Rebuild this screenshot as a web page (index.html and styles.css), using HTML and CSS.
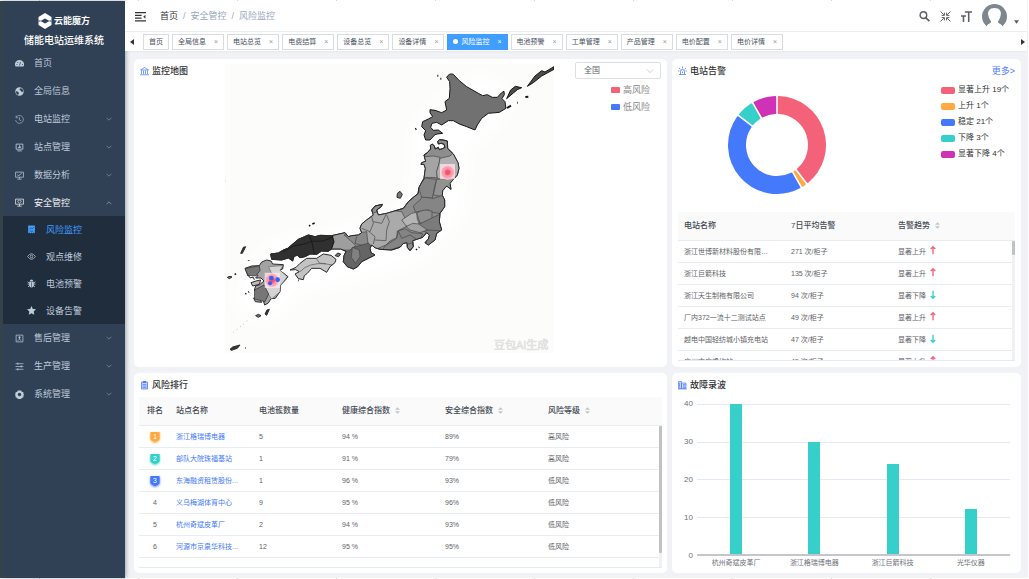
FILE: index.html
```html
<!DOCTYPE html>
<html lang="zh-CN">
<head>
<meta charset="utf-8">
<title>储能电站运维系统</title>
<link rel="stylesheet" href="styles.css">
</head>
<body>
<svg class="sprite" aria-hidden="true">
  <symbol id="down" viewBox="0 0 10 10"><path d="M1 3l4 4 4-4" fill="none" stroke="currentColor"/></symbol>
  <symbol id="up" viewBox="0 0 10 10"><path d="M1 7l4-4 4 4" fill="none" stroke="currentColor"/></symbol>
  <symbol id="sort" viewBox="0 0 6 10"><path d="M0 4l3-3 3 3zM0 6l3 3 3-3z" fill="#c0c4cc"/></symbol>
  <symbol id="rise" viewBox="0 0 8 12"><path d="M4 11V1M1 4l3-3 3 3" fill="none" stroke="#f4627a" stroke-width="1.8"/></symbol>
  <symbol id="fall" viewBox="0 0 8 12"><path d="M4 1v10M1 8l3 3 3-3" fill="none" stroke="#36cfc9" stroke-width="1.8"/></symbol>
  <symbol id="shield" viewBox="0 0 12 12"><path d="M1 1h10v8L9 10.500 6 12 3 10.500 1 9z" fill="currentColor"/></symbol>
</svg>
<div class="app">
  <aside class="sidebar">
    <div class="brand">
      <div class="logo">
        <svg viewBox="0 0 28 32"><path d="M14 0l13 8v16l-13 8L1 24V8z" fill="#fff"/><path d="M5 16l9-5 9 5-9 5z" fill="#304156"/><path d="M1 16h4M23 16h4" stroke="#304156" stroke-width="2"/></svg>
        <span>云能魔方</span>
      </div>
      <h1>储能电站运维系统</h1>
    </div>
    <nav>
      <ul class="menu">
        <li><a href="#"><svg viewBox="0 0 18 16"><path d="M1 14a9 9 0 1 1 16 0z" fill="currentColor"/><path d="M9 12l2-7M3 10h2M5 5l1 2M14 10h2" stroke="#304156" stroke-width="1.500"/></svg><span>首页</span></a></li>
        <li><a href="#"><svg viewBox="0 0 16 16"><circle cx="8" cy="8" r="7.500" fill="currentColor"/><path d="M9 2l4 1 2 5-3 1-2-3-2-1zM2 7l4 2 1 3-2 2-3-3z" fill="#304156"/></svg><span>全局信息</span></a></li>
        <li><a href="#"><svg viewBox="0 0 16 16"><path d="M2 4a7 7 0 1 1-1 5M2 1v4h4M8 4v5l3 1" fill="none" stroke="currentColor"/></svg><span>电站监控</span><svg class="fold"><use href="#down"/></svg></a></li>
        <li><a href="#"><svg viewBox="0 0 16 16"><path d="M2 2h12v9H2zM4 14h8M6 9V7M8 9V4M10 9V6" fill="none" stroke="currentColor" stroke-width="1.500"/></svg><span>站点管理</span><svg class="fold"><use href="#down"/></svg></a></li>
        <li><a href="#"><svg viewBox="0 0 16 16"><path d="M1 2h14v9H1zM8 11v3M4 14.500h8M4 7l3 1 5-4" fill="none" stroke="currentColor" stroke-width="1.300"/></svg><span>数据分析</span><svg class="fold"><use href="#down"/></svg></a></li>
        <li><a class="open" href="#"><svg viewBox="0 0 16 16"><path d="M1 2h14v9H1zM8 11v3M4 14.500h8" fill="none" stroke="currentColor" stroke-width="1.300"/><path d="M8 4l3 1v2L8 9 5 7V5z" fill="none" stroke="currentColor"/></svg><span>安全管控</span><svg class="fold"><use href="#up"/></svg></a>
          <ul class="submenu">
            <li><a class="active" href="#"><svg viewBox="0 0 16 16"><path d="M2 1h12v14l-2-1.500L10 15l-2-1.500L6 15l-2-1.500L2 15z" fill="currentColor"/><path d="M4 8l3-3 2 2 3-3M5 11h6" fill="none" stroke="#1f2d3d"/></svg><span>风险监控</span></a></li>
            <li><a href="#"><svg viewBox="0 0 16 16"><path d="M1 8q7-10 14 0-7 10-14 0z" fill="none" stroke="currentColor" stroke-width="1.300"/><circle cx="8" cy="8" r="2.300" fill="none" stroke="currentColor" stroke-width="1.300"/></svg><span>观点维修</span></a></li>
            <li><a href="#"><svg viewBox="0 0 16 16"><path d="M5 4a3 3 0 0 1 6 0zM4 5h8v6a4 4 0 0 1-8 0z" fill="currentColor"/><path d="M1 5l3 2M15 5l-3 2M1 9h14M2 14l3-3M14 14l-3-3" stroke="currentColor" stroke-width="1.500"/><path d="M8 6v8" stroke="#1f2d3d"/></svg><span>电池预警</span></a></li>
            <li><a href="#"><svg viewBox="0 0 16 16"><path d="M8 0l2.400 5.200 5.600.7-4.100 3.900 1 5.700L8 12.800 3.100 15.500l1-5.700L0 5.900l5.600-.7z" fill="currentColor"/></svg><span>设备告警</span></a></li>
          </ul>
        </li>
        <li><a href="#"><svg viewBox="0 0 16 16"><path d="M2 2h12v12H2zM5 12l3-3 3 3M8 9V7" fill="none" stroke="currentColor" stroke-width="1.300"/><circle cx="8" cy="6" r="1.800" fill="currentColor"/></svg><span>售后管理</span><svg class="fold"><use href="#down"/></svg></a></li>
        <li><a href="#"><svg viewBox="0 0 16 16"><path d="M1 3h14M1 8h14M1 13h14M5 1v4M11 6v4M5 11v4" stroke="currentColor" stroke-width="1.300"/></svg><span>生产管理</span><svg class="fold"><use href="#down"/></svg></a></li>
        <li><a href="#"><svg viewBox="0 0 16 16"><path d="M5 1h6l1 2 3 1v3l1 1-1 2v3l-3 1-1 2H5l-1-2-3-1v-3L0 8l1-2V4l3-1z" fill="currentColor"/><circle cx="8" cy="8" r="3" fill="#304156"/></svg><span>系统管理</span><svg class="fold"><use href="#down"/></svg></a></li>
      </ul>
    </nav>
  </aside>

  <div class="main">
    <header class="topbar">
      <button class="icon-btn" aria-label="收起菜单"><svg viewBox="0 0 20 18"><path d="M0 2h20M0 7h12M0 12h12M0 17h20" stroke="#333" stroke-width="2"/><path d="M19 6v7l-4-3.500z" fill="#333"/></svg></button>
      <nav class="crumbs"><a href="#">首页</a><i>/</i><span>安全管控</span><i>/</i><span>风险监控</span></nav>
      <div class="tools">
        <button class="icon-btn" aria-label="搜索"><svg viewBox="0 0 20 20"><circle cx="8" cy="7.500" r="6" fill="none" stroke="#5a5e66" stroke-width="2.600"/><path d="M12 12l7 6.500" stroke="#5a5e66" stroke-width="3.200"/></svg></button>
        <button class="icon-btn" aria-label="全屏"><svg viewBox="0 0 20 20"><path d="M1 1l6 6M8 3v5H3M19 1l-6 6M12 3v5h5M1 19l6-6M8 17v-5H3M19 19l-6-6M12 17v-5h5" fill="none" stroke="#5a5e66" stroke-width="1.800"/></svg></button>
        <button class="icon-btn" aria-label="字号"><svg viewBox="0 0 20 20"><path d="M7 2h13M14 2v18M0 9h9M4.500 9v11" fill="none" stroke="#5a5e66" stroke-width="2.800"/></svg></button>
        <button class="user" aria-label="用户"><svg class="avatar" viewBox="0 0 50 50"><circle cx="25" cy="25" r="25" fill="#7d878f"/><path d="M25 8c-10 0-15 7-12 16 1 6 4 8 5 11 0 4-5 4-8 8v7h30v-7c-3-4-8-4-8-8 1-3 4-5 5-11C40 15 35 8 25 8z" fill="#fff"/></svg><svg class="caret" viewBox="0 0 6 4"><path d="M0 0h6L3 4z" fill="#5a5e66"/></svg></button>
      </div>
    </header>
    <div class="tagbar">
      <button class="scroll" aria-label="向左"><svg viewBox="0 0 4 6"><path d="M4 0v6L0 3z"/></svg></button>
      <nav class="tags">
        <a href="#">首页</a><a href="#">全局信息<i>×</i></a><a href="#">电站总览<i>×</i></a><a href="#">电费结算<i>×</i></a><a href="#">设备总览<i>×</i></a><a href="#">设备详情<i>×</i></a><a class="current" href="#">风险监控<i>×</i></a><a href="#">电池预警<i>×</i></a><a href="#">工单管理<i>×</i></a><a href="#">产品管理<i>×</i></a><a href="#">电价配置<i>×</i></a><a href="#">电价详情<i>×</i></a>
      </nav>
      <button class="scroll" aria-label="向右"><svg viewBox="0 0 4 6"><path d="M0 0v6l4-3z"/></svg></button>
    </div>

    <main class="board">
      <section class="card map-card">
        <h2><svg viewBox="0 0 18 18"><path d="M1 7l8-5 8 5zM3 8v7M7 8v7M11 8v7M15 8v7M0 16.500h18" fill="none" stroke="currentColor" stroke-width="1.500"/></svg>监控地图</h2>
        <svg class="map" viewBox="15 12 987 868" role="img" aria-label="风险分布地图">
          <defs>
            <radialGradient id="heat"><stop offset="0" stop-color="#f4456a"/><stop offset=".35" stop-color="#f4627a"/><stop offset=".45" stop-color="#f98fa4"/><stop offset=".8" stop-color="#fba9ba"/><stop offset="1" stop-color="#fde3e8"/></radialGradient>
            <filter id="soft" x="-20%" y="-20%" width="140%" height="140%"><feGaussianBlur stdDeviation="22"/></filter>
            <path id="honshu" d="M612 15L622 8 632-3 631-14 637-18 643-12 646-3 655-8 658-1 667-4 675-8 672-17 664-20 655-18 653-26 659-31 670-30 682-27 683-5 700 12 714 38 717 55 712 75 697 92 690 100 693 118 680 108 668 122 667 136 674 150 674 170 660 190 658 215 665 240 650 250 645 270 625 285 615 278 625 267 628 256 620 248 608 262 590 268 578 272 580 290 570 302 562 292 561 278 550 280 540 292 515 300 480 298 465 293 455 285 450 295 453 308 465 315 445 325 425 335 413 350 400 357 382 350 370 335 372 317 378 304 362 297 348 297 335 297 325 304 305 303 290 313 270 312 255 320 240 323 232 316 222 319 218 333 205 324 185 330 155 328 152 312 175 309 190 300 203 295 235 268 265 255 285 260 300 256 335 257 375 248 385 260 395 257 415 255 425 248 420 235 425 222 440 210 460 195 455 180 465 168 487 163 484 170 470 180 475 195 500 190 550 175 565 155 580 142 594 131 597 112 612 85 616 55 612 43 603 43 605 38 617 34z"/>
            <clipPath id="land"><use href="#honshu"/></clipPath>
          </defs>
          <path d="M15 12h987v868H15z" fill="#fcfcfb"/>
          <path d="M780 130L660 230 650 430 560 530 400 580 200 620 130 700" fill="none" stroke="#fff" stroke-width="170" stroke-linecap="round" stroke-linejoin="round" filter="url(#soft)"/>
          <g stroke="#151515" stroke-width="3" stroke-linejoin="round">
            <path d="M680 52Q688 38 700 43L718 62 740 80 775 100 788 107 802 104 817 112 832 112 845 98 852 94 853 104 846 116 855 125 858 145 838 157 805 160 785 175 772 195 765 210 740 200 718 192 700 182 685 182 665 195 650 187 636 190 632 202 640 211 655 210 668 220 652 222 645 224 630 240 617 240 612 225 617 212 605 200 608 185 625 177 638 170 630 158 630 149 645 151 665 158 680 150 675 125 688 115 690 85 689 65z" fill="#717171"/>
            <path d="M860 116L872 90 886 79 905 83 892 89 880 99zM922 79L945 48 965 32 975 36 1002 20V28L965 48 940 68z" fill="#4c4c4c"/>
            <path d="M652 47h3M661 56h3M586 208l3-2M861 144l12-7M892 128h2M916 111l9-1" fill="none" stroke-width="6"/>
          </g>
          <g transform="translate(0 270)" stroke="#2a2a2a" stroke-width="3" stroke-linejoin="round">
            <use href="#honshu" fill="#8d8d8d"/>
            <g clip-path="url(#land)" stroke="#444" stroke-width="2">
              <path d="M590 18L618 20 640 18 660 22 657 42 650 65 652 83 618 82 590 95z" fill="#a4a4a4"/>
              <path d="M660 25L690 18 710 0 740 60 700 98 652 85 650 65 657 42z" fill="#b0b0b0"/>
              <path d="M595 110L615 84 650 88 645 106 637 145 605 142z" fill="#858585"/>
              <path d="M650 88L720 85V130L668 140 640 135z" fill="#929292"/>
              <path d="M580 168L600 150 606 141 640 145 668 136 690 150 660 190 640 188 625 180 586 186z" fill="#858585"/>
              <path d="M415 235L450 190 505 180 545 185 555 204 548 214 562 222 558 230 532 243 530 263 510 273 498 285 466 298 440 275z" fill="#aaa"/>
              <path d="M545 210L575 190 590 187 592 208 598 221 575 230 558 228 550 216z" fill="#b5b5b5"/>
              <path d="M590 190Q612 174 636 184V205Q620 225 600 219z" fill="#8e8e8e"/>
              <path d="M598 222L665 190 690 260 620 300 618 246 575 231z" fill="#7b7b7b"/>
              <path d="M558 230L578 220 596 222 622 240 600 248 570 240z" fill="#a2a2a2"/>
              <path d="M535 243L555 236 575 248 608 251 600 272 555 285 480 310 497 286 530 265z" fill="#848484"/>
              <path d="M330 240H375L410 285 390 300 330 300 338 275z" fill="#9e9e9e"/>
              <path d="M372 255L440 245 445 290 410 290 395 275z" fill="#888"/>
              <path d="M360 310L390 302 400 292 425 285 445 280 475 315 405 370 355 350z" fill="#656565"/>
              <path d="M397 292L418 300 420 320 407 340 394 322z" fill="#818181"/>
              <path d="M140 350L145 300 265 245 335 252 342 275 330 310 220 345z" fill="#303030" stroke="#111" stroke-width="3"/>
              <path d="M190 305L220 288 255 282 275 274 283 310M268 257L275 274 310 273 340 260" fill="none" stroke="#111"/>
              <path d="M425 235L450 245 460 220 455 200M460 215L485 220 500 190M448 246L465 260 460 282M465 270L498 272 500 240 508 215 500 195M618 240L660 242M536 245L545 265 570 255 590 268M410 260L405 280 425 286" fill="none"/>
            </g>
            <use href="#honshu" fill="none"/>
            <path d="M210 360L228 352 240 340 260 325 290 325 310 312 333 316 348 328 345 338 330 350 320 367 300 355 275 355 262 370 253 377 250 389 235 386 225 372 238 365 227 359z" fill="#c3c3c3"/>
            <path d="M240 365Q265 337 318 341M288 324L298 339 338 345" fill="none" stroke="#555" stroke-width="2"/>
            <path d="M75 355L95 348 118 347 125 336 140 330 153 333 158 342 190 344 188 357 178 361 190 369 204 380 197 389 182 405 180 425 166 445 153 446 145 459 134 465 130 452 136 445 127 439 117 445 125 457 106 455 101 444 113 440 103 420 107 408 119 404 132 393 123 384 107 384 114 376 96 370 84 378z" fill="#a3a3a3"/>
            <path d="M146 350L188 347 180 361 202 380 182 405 180 425 155 447 134 415 132 395 155 370z" fill="#d4d4d4" stroke-width="1"/>
            <path d="M75 356L118 347 120 362 107 378 84 376zM104 420L132 405 146 432 135 455 103 447z" fill="#777" stroke-width="2"/>
            <path d="M93 398L108 393 122 390 118 403 98 408zM83 374l8 10 8-3 4 8" fill="#bbb"/>
            <path d="M532 130l8-6 7 9-6 12-10-3zM107 497l8-4 8 4-8 5zM22 382l8-3 6 2-8 5zM345 317l8-8 9 3-6 8z" fill="#777"/>
            <path d="M62 310l8-18 7-2-10 20zM135 492l6-12 7-2-8 18zM30 598l8-7 22-6-8 10-18 6z" fill="#333"/>
            <path d="M75 594h2M44 374l4-3M267 228l4-2M277 222l7-3M86 330v2M76 432l3-2M85 427l2-2M234 391h2M588 300l3-3M596 293l2-2" stroke="#151515" stroke-width="5"/>
            <path d="M82 513L34 552" stroke="#777" stroke-dasharray="2 11" stroke-width="2"/>
            <path d="M14 87v9" stroke="#999"/>
          </g>
          <path d="M660 312h45v46h-45zM134 638h46v46h-46z" fill="#fbe9ec" opacity=".75"/>
          <circle cx="683" cy="337" r="22" fill="url(#heat)"/>
          <circle cx="156" cy="661" r="22" fill="url(#heat)"/>
          <g fill="#2f62f5"><circle cx="154" cy="654" r="7"/><circle cx="173" cy="659" r="7"/><circle cx="150" cy="670" r="6"/></g>
          <text class="watermark" x="822" y="867">豆包AI生成</text>
        </svg>
        <div class="map-side">
          <div class="picker"><select aria-label="区域"><option>全国</option></select><svg><use href="#down"/></svg></div>
          <ul class="levels"><li class="c-red">高风险</li><li class="c-blue">低风险</li></ul>
        </div>
      </section>

      <section class="card alarm-card">
        <div class="card-head">
          <h2><svg viewBox="0 0 18 18"><path d="M5 15V10a4 4 0 0 1 8 0v5M2 16h14M9 0v4M2 3l3 3M16 3l-3 3M0 9h3M15 9h3M9 10v3" fill="none" stroke="currentColor" stroke-width="1.600"/></svg>电站告警</h2>
          <a class="more" href="#">更多&gt;</a>
        </div>
        <div class="pie">
          <svg viewBox="-50 -50 100 100" role="img" aria-label="告警趋势占比" stroke-width="2" stroke-linejoin="round">
            <path fill="#f4627a" stroke="#f4627a" d="M1.800-47.970A48 48 0 0 1 30.630 36.960L20.880 24.250A32 32 0 0 0 1.800-31.950z"/>
            <path fill="#ffa940" stroke="#ffa940" d="M27.770 39.150A48 48 0 0 1 25.540 40.640L17.530 26.770 18.020 26.440z"/>
            <path fill="#4479fb" stroke="#4479fb" d="M22.420 42.440A48 48 0 0 1-39.150-27.770L-26.440-18.020A32 32 0 0 0 14.420 28.570z"/>
            <path fill="#36cfc9" stroke="#36cfc9" d="M-36.960-30.630A48 48 0 0 1-25.540-40.640L-17.530-26.770A32 32 0 0 0-24.250-20.880z"/>
            <path fill="#cf32b4" stroke="#cf32b4" d="M-22.420-42.440A48 48 0 0 1-1.800-47.970L-1.800-31.950A32 32 0 0 0-14.420-28.570z"/>
          </svg>
          <ul class="legend"><li class="c-red">显著上升 19个</li><li class="c-orange">上升 1个</li><li class="c-blue">稳定 21个</li><li class="c-teal">下降 3个</li><li class="c-purple">显著下降 4个</li></ul>
        </div>
        <div class="scrollbox alarm-list">
          <table>
            <colgroup><col class="w-station"><col class="w-avg"><col></colgroup>
            <thead><tr><th>电站名称</th><th>7日平均告警</th><th>告警趋势<svg class="sort"><use href="#sort"/></svg></th></tr></thead>
            <tbody>
              <tr><td>浙江世博新材料股份有限…</td><td>271 次/柜子</td><td>显著上升<svg class="trend"><use href="#rise"/></svg></td></tr>
              <tr><td>浙江巨箭科技</td><td>135 次/柜子</td><td>显著上升<svg class="trend"><use href="#rise"/></svg></td></tr>
              <tr><td>浙江天生制袍有限公司</td><td>94 次/柜子</td><td>显著下降<svg class="trend"><use href="#fall"/></svg></td></tr>
              <tr><td>厂内372一流十二测试站点</td><td>49 次/柜子</td><td>显著上升<svg class="trend"><use href="#rise"/></svg></td></tr>
              <tr><td>越电中国轻纺城小镇充电站</td><td>47 次/柜子</td><td>显著下降<svg class="trend"><use href="#fall"/></svg></td></tr>
              <tr><td>广州市广重均站</td><td>45 次/柜子</td><td>显著上升<svg class="trend"><use href="#rise"/></svg></td></tr>
            </tbody>
          </table>
          <div class="track"><div class="thumb"></div></div>
        </div>
      </section>

      <section class="card rank-card">
        <h2><svg viewBox="0 0 18 18"><path d="M3 3h12v14H3z" fill="#c9d7ff" stroke="currentColor" stroke-width="1.600"/><path d="M6 1h6v4H6z" fill="currentColor"/><path d="M5 8h8M5 11h8M5 14h8" stroke="currentColor" stroke-width="1.400"/></svg>风险排行</h2>
        <div class="scrollbox rank-list">
          <table>
            <colgroup><col class="w-rank"><col class="w-name"><col class="w-name"><col class="w-index"><col class="w-index"><col></colgroup>
            <thead><tr><th class="num">排名</th><th>站点名称</th><th>电池簇数量</th><th>健康综合指数<svg class="sort"><use href="#sort"/></svg></th><th>安全综合指数<svg class="sort"><use href="#sort"/></svg></th><th>风险等级<svg class="sort"><use href="#sort"/></svg></th></tr></thead>
            <tbody>
              <tr><td class="num"><span class="badge b-orange"><svg><use href="#shield"/></svg><b>1</b></span></td><td><a href="#">浙江格瑞博电器</a></td><td>5</td><td>94 %</td><td>89%</td><td>高风险</td></tr>
              <tr><td class="num"><span class="badge b-teal"><svg><use href="#shield"/></svg><b>2</b></span></td><td><a href="#">部队大院珠福基站</a></td><td>1</td><td>91 %</td><td>79%</td><td>高风险</td></tr>
              <tr><td class="num"><span class="badge b-blue"><svg><use href="#shield"/></svg><b>3</b></span></td><td><a href="#">东海融资租赁股份...</a></td><td>1</td><td>96 %</td><td>93%</td><td>低风险</td></tr>
              <tr><td class="num">4</td><td><a href="#">义乌梅湖体育中心</a></td><td>9</td><td>95 %</td><td>96%</td><td>低风险</td></tr>
              <tr><td class="num">5</td><td><a href="#">杭州奇斌皮革厂</a></td><td>2</td><td>94 %</td><td>93%</td><td>低风险</td></tr>
              <tr><td class="num">6</td><td><a href="#">河源市京泉华科技...</a></td><td>12</td><td>95 %</td><td>95%</td><td>低风险</td></tr>
            </tbody>
          </table>
          <div class="track"><div class="thumb long"></div></div>
        </div>
      </section>

      <section class="card fault-card">
        <h2><svg viewBox="0 0 18 18"><path d="M1 2h6v14H1zM7 5h9v11H7z" fill="#c9d7ff" stroke="currentColor" stroke-width="1.400"/><path d="M3 5v9M10 8h5M10 11h5M10 14h5M0 17h18" stroke="currentColor" stroke-width="1.300"/></svg>故障录波</h2>
        <div class="chart">
          <div class="y-axis"><span>40</span><span>30</span><span>20</span><span>10</span><span>0</span></div>
          <div class="plot">
            <div class="lines"><i></i><i></i><i></i><i></i></div>
            <div class="bars"><div style="height:100%"></div><div style="height:75%"></div><div style="height:60%"></div><div style="height:30%"></div></div>
          </div>
          <div class="x-axis"><span>杭州奇斌皮革厂</span><span>浙江格瑞博电器</span><span>浙江巨箭科技</span><span>光华仪器</span></div>
        </div>
      </section>
    </main>
  </div>
</div>
</body>
</html>
```
FILE: styles.css
```css
* { box-sizing: border-box; }
body {
  margin: 0;
  padding: 1px 1px 1px 0;
  background: repeating-linear-gradient(90deg, #fff 0 39px, #d5d5d5 39px 40px, #fff 40px 99px);
  font: 7px/10px "Liberation Sans", "Noto Sans CJK SC", sans-serif;
  color: #606266;
}
ul { margin: 0; padding: 0; list-style: none; }
h1, h2 { margin: 0; }
a { color: inherit; text-decoration: none; }
i { font-style: normal; }
button { padding: 0; border: 0; background: none; font: inherit; color: inherit; }
svg { display: block; flex: none; }
.sprite { position: absolute; width: 0; height: 0; }

.app { display: flex; min-height: calc(100vh - 2px); background: #f0f2f5; }
.sidebar {
  flex: none;
  width: 125px;
  border-left: 3px solid #34424a;
  background: #304156;
  color: #bfcbd9;
  box-shadow: 1px 0 4px rgba(0, 21, 41, .35);
}
.brand { height: 48px; padding-top: 11px; text-align: center; color: #fff; }
.logo { display: flex; justify-content: center; align-items: center; gap: 2px; height: 18px; font: 700 9px/16px "Liberation Serif", "Noto Sans CJK SC", serif; }
.logo svg { width: 14px; height: 16px; }
.brand h1 { margin-top: 5px; font-size: 10px; line-height: 12px; font-weight: 500; }
.menu { font-size: 9px; }
.menu a { display: flex; align-items: center; gap: 10px; height: 28px; padding: 0 13px 0 12px; }
.menu a svg { width: 9px; height: 9px; }
.menu a .fold { width: 6px; height: 6px; margin-left: auto; opacity: .7; }
.menu .open { height: 27px; color: #f4f4f5; }
.submenu { background: #1f2d3d; }
.submenu a { height: 27px; padding-left: 24px; }
.submenu a.active { color: #409eff; }

.main { flex: 1; min-width: 0; display: flex; flex-direction: column; padding-right: 1px; }
.topbar { display: flex; align-items: center; height: 30px; padding: 0 8px 0 10px; background: #fff; }
.icon-btn svg { width: 11px; height: 11px; }
.crumbs { display: flex; gap: 5px; margin-left: 14px; font-size: 9px; color: #97a8be; }
.crumbs a { color: #303133; }
.tools { display: flex; align-items: center; gap: 10px; margin-left: auto; }
.user { display: flex; align-items: center; gap: 7px; }
.avatar { width: 25px; height: 25px; }
.caret { width: 5px; height: 4px; margin-top: 12px; }
.tagbar { display: flex; align-items: center; height: 20px; padding: 0 2px 0 5px; border-top: 1px solid #eceef1; background: #fff; box-shadow: 0 1px 2px rgba(0, 0, 0, .04); }
.scroll svg { width: 4px; height: 6px; fill: #333; }
.tags { display: flex; flex: 1; gap: 3px; margin-left: 9px; overflow: hidden; color: #495060; }
.tags a { display: flex; align-items: center; gap: 8px; height: 16px; padding: 0 5px; border: 1px solid #d8dce5; background: #fff; white-space: nowrap; }
.tags i { color: #999; }
.tags .current { border-color: #409eff; background: #409eff; color: #fff; }
.tags .current::before { content: ""; width: 5px; height: 5px; margin-right: -5px; border-radius: 50%; background: #fff; }
.tags .current i { color: #fff; }

.board { flex: 1; display: grid; grid-template-columns: minmax(0, 533fr) minmax(0, 349fr); grid-template-rows: 308fr 200fr; gap: 6px 5px; padding: 8px 6px 5px 9px; }
.card { min-width: 0; min-height: 0; padding: 5px 6px; border-radius: 5px; background: #fff; }
h2 { display: flex; align-items: center; gap: 3px; height: 14px; font-size: 9px; font-weight: 500; color: #303133; }
h2 svg { width: 9px; height: 10px; color: #4f7dfb; }

.map-card { display: flex; align-items: flex-start; }
.map-card h2 { flex: none; width: 85px; }
.map { flex: 1; min-width: 0; height: auto; }
.watermark { font: 400 33px "Liberation Sans", "Noto Sans CJK SC", sans-serif; fill: #fff; stroke: #dcdcdc; stroke-width: 2; }
.map-side { flex: none; width: 86px; margin: -2px 0 0 21px; }
.picker { display: flex; align-items: center; height: 17px; padding-right: 6px; border: 1px solid #dcdfe6; border-radius: 2px; }
.picker select { flex: 1; appearance: none; padding: 0 0 0 8px; border: 0; background: none; font: inherit; font-size: 8px; color: inherit; }
.picker svg { width: 8px; height: 8px; color: #c0c4cc; }
.levels { padding: 2px 11px 0 0; font-size: 9px; color: #888; }
.levels li, .legend li { display: flex; align-items: center; }
.levels li { justify-content: flex-end; gap: 3px; height: 17px; }
.levels li::before { content: ""; width: 9px; height: 6px; border-radius: 1px; background: var(--c); }
.c-red { --c: #f4627a; }
.c-orange { --c: #ffa940; }
.c-blue { --c: #4479fb; }
.c-teal { --c: #36cfc9; }
.c-purple { --c: #cf32b4; }

.alarm-card, .rank-card, .fault-card { display: flex; flex-direction: column; }
.card-head { display: flex; justify-content: space-between; }
.more { font-size: 9px; line-height: 14px; color: #4f7dfb; }
.pie { display: grid; grid-template-columns: 198fr 139fr; align-items: start; flex: 1; padding: 4px 0; }
.pie svg { justify-self: center; width: 100px; height: 100px; margin-top: 13px; }
.legend { justify-self: end; width: 74px; font-size: 8px; color: #333; white-space: nowrap; }
.legend li { gap: 3px; height: 16px; }
.legend li::before { content: ""; width: 14px; height: 7px; border-radius: 2px; background: var(--c); }

.scrollbox { display: flex; overflow: hidden; position: relative; border-bottom: 1px solid #e4eaf5; }
.alarm-list { height: 149px; margin-bottom: 1px; }
.rank-list { flex: 1; margin: 5px -1px 0; }
table { width: 100%; height: max-content; table-layout: fixed; border-collapse: separate; border-spacing: 0; }
th, td { height: 22px; padding: 0 5px; border-bottom: 1px solid #e8edf2; text-align: left; white-space: nowrap; overflow: hidden; }
th { height: 29px; background: #fafafa; font-size: 8px; font-weight: 500; color: #454a54; }
.alarm-list th, .alarm-list td { padding-left: 6px; }
td a { color: #4479fb; }
.rank-list .num { padding: 0; text-align: center; }
.sort { display: inline-block; width: 5px; height: 9px; margin-left: 5px; vertical-align: middle; }
.trend { display: inline-block; width: 6px; height: 9px; margin-left: 4px; vertical-align: -1px; }
.w-station { width: 107px; }
.w-avg { width: 107px; }
.w-rank { width: 32px; }
.w-name { width: 83px; }
.w-index { width: 103px; }
.track { position: absolute; top: 29px; right: 0; bottom: 0; width: 3px; background: #f1f1f1; }
.thumb { height: 14px; border-radius: 1px; background: #c1c1c1; }
.thumb.long { height: 90%; }
.badge { display: inline-grid; place-items: center; vertical-align: middle; color: var(--b); filter: drop-shadow(0 1px 1px var(--b)); }
.badge > * { grid-area: 1 / 1; }
.badge svg { width: 12px; height: 11px; }
.badge b { font-weight: 400; color: #fff; z-index: 1; }
.b-orange { --b: #ffa940; }
.b-teal { --b: #36cfc9; }
.b-blue { --b: #4479fb; }

.chart { flex: 1; display: grid; grid-template-columns: 15px 1fr; grid-template-rows: 1fr 12px; column-gap: 4px; padding: 12px 5px 0 0; }
.y-axis { display: flex; flex-direction: column; justify-content: space-between; margin: -5px 0; font-size: 8px; text-align: right; color: #6e7079; }
.plot { display: grid; border-bottom: 2px solid #c4c6ca; }
.lines, .bars { grid-area: 1 / 1; }
.lines { display: flex; flex-direction: column; }
.lines i { flex: 1; border-top: 1px solid #e4eaf5; }
.bars { display: grid; grid-template-columns: repeat(4, 1fr); align-items: end; justify-items: center; }
.bars div { width: 12px; background: #36cfc9; }
.x-axis { grid-column: 2; display: grid; grid-template-columns: repeat(4, 1fr); padding-top: 2px; text-align: center; color: #6e7079; white-space: nowrap; }
```
